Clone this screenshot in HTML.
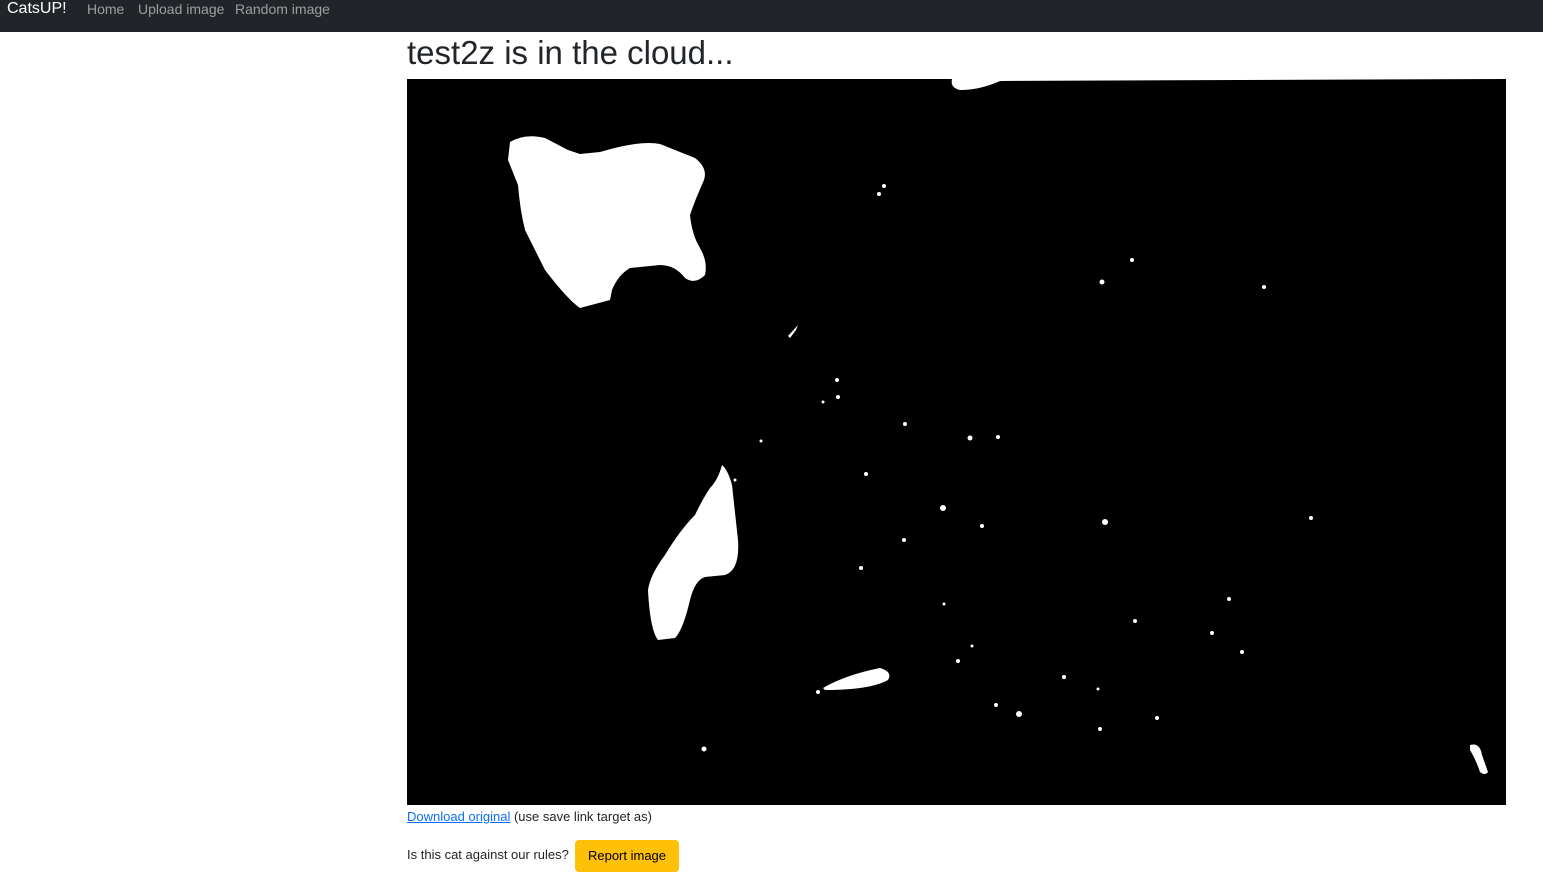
<!DOCTYPE html>
<html><head><meta charset="utf-8"><style>
body{margin:0;background:#fff;font-family:"Liberation Sans",sans-serif;color:#212529}
.nav{height:32px;background:#212529;position:relative}
.nav span{position:absolute;top:0;line-height:18px;font-size:14px;color:rgba(255,255,255,.55)}
.brand{left:7px;color:#fff!important;font-size:16px!important}
h1{position:absolute;left:407px;top:33px;margin:0;font-weight:400;font-size:33px;line-height:40px}
.img{position:absolute;left:407px;top:79px;width:1099px;height:726px;background:#000}
.dl{position:absolute;left:407px;top:808px;font-size:13px;line-height:18px}
.dl a{color:#0d6efd;text-decoration:underline}
.q{position:absolute;left:407px;top:846px;font-size:13px;line-height:18px}
.btn{position:absolute;left:575px;top:840px;width:104px;height:32px;background:#ffc107;border-radius:4px;font-size:13px;line-height:32px;text-align:center;color:#000}
</style></head><body>
<div class="nav"><span class="brand">CatsUP!</span><span style="left:87px">Home</span><span style="left:138px">Upload image</span><span style="left:235px">Random image</span></div>
<h1>test2z is in the cloud...</h1>
<div class="img"><svg width="1099" height="726" viewBox="407 79 1099 726">
<g fill="#fff">
<path d="M952 79 L1505 79 L1000 81 Q980 90 960 90 Q950 88 952 79Z"/>
<path d="M510 142 Q525 133 545 138 L568 150 L580 154 L600 152 Q640 140 660 144 L695 158 Q708 168 704 180 Q695 200 690 215 Q692 235 700 248 Q708 262 705 275 Q695 285 685 278 Q675 265 660 265 L630 268 Q618 275 612 290 L610 300 L580 308 Q568 300 545 270 Q535 250 525 230 Q520 210 518 185 Q512 170 508 160Z"/>
<path d="M722 465 Q728 470 732 485 L738 540 Q740 570 725 575 L705 577 Q695 580 690 600 Q683 630 675 638 L658 640 Q650 630 648 590 Q650 575 665 555 Q680 530 695 515 Q702 500 710 488 Q718 480 722 465Z"/>
<path d="M823 688 Q845 675 880 668 Q893 672 888 680 Q870 690 825 690Z"/>
<path d="M1470 745 Q1480 742 1482 755 L1488 772 Q1485 776 1480 772 Q1476 760 1470 750Z"/>
<path d="M788 336 L798 325 L796 330 L790 338Z"/>
</g>
<g fill="#fff">
<circle cx="884" cy="186" r="2"/><circle cx="879" cy="194" r="2"/><circle cx="1132" cy="260" r="2"/><circle cx="1102" cy="282" r="2.5"/><circle cx="1264" cy="287" r="2"/>
<circle cx="837" cy="380" r="2"/><circle cx="838" cy="397" r="2"/><circle cx="823" cy="402" r="1.5"/><circle cx="905" cy="424" r="2"/><circle cx="998" cy="437" r="2"/><circle cx="970" cy="438" r="2.5"/><circle cx="761" cy="441" r="1.5"/>
<circle cx="866" cy="474" r="2"/><circle cx="735" cy="480" r="1.5"/><circle cx="943" cy="508" r="3"/><circle cx="982" cy="526" r="2"/><circle cx="1105" cy="522" r="3"/><circle cx="1311" cy="518" r="2"/><circle cx="904" cy="540" r="2"/><circle cx="861" cy="568" r="2"/>
<circle cx="1229" cy="599" r="2"/><circle cx="944" cy="604" r="1.5"/><circle cx="1135" cy="621" r="2"/><circle cx="1212" cy="633" r="2"/><circle cx="1242" cy="652" r="2"/><circle cx="972" cy="646" r="1.5"/><circle cx="958" cy="661" r="2"/><circle cx="1064" cy="677" r="2"/><circle cx="1098" cy="689" r="1.5"/>
<circle cx="996" cy="705" r="2"/><circle cx="1019" cy="714" r="3"/><circle cx="1157" cy="718" r="2"/><circle cx="1100" cy="729" r="2"/><circle cx="704" cy="749" r="2.5"/><circle cx="818" cy="692" r="2"/>
</g></svg></div>
<div class="dl"><a>Download original</a> (use save link target as)</div>
<div class="q">Is this cat against our rules?</div>
<div class="btn">Report image</div>
</body></html>
